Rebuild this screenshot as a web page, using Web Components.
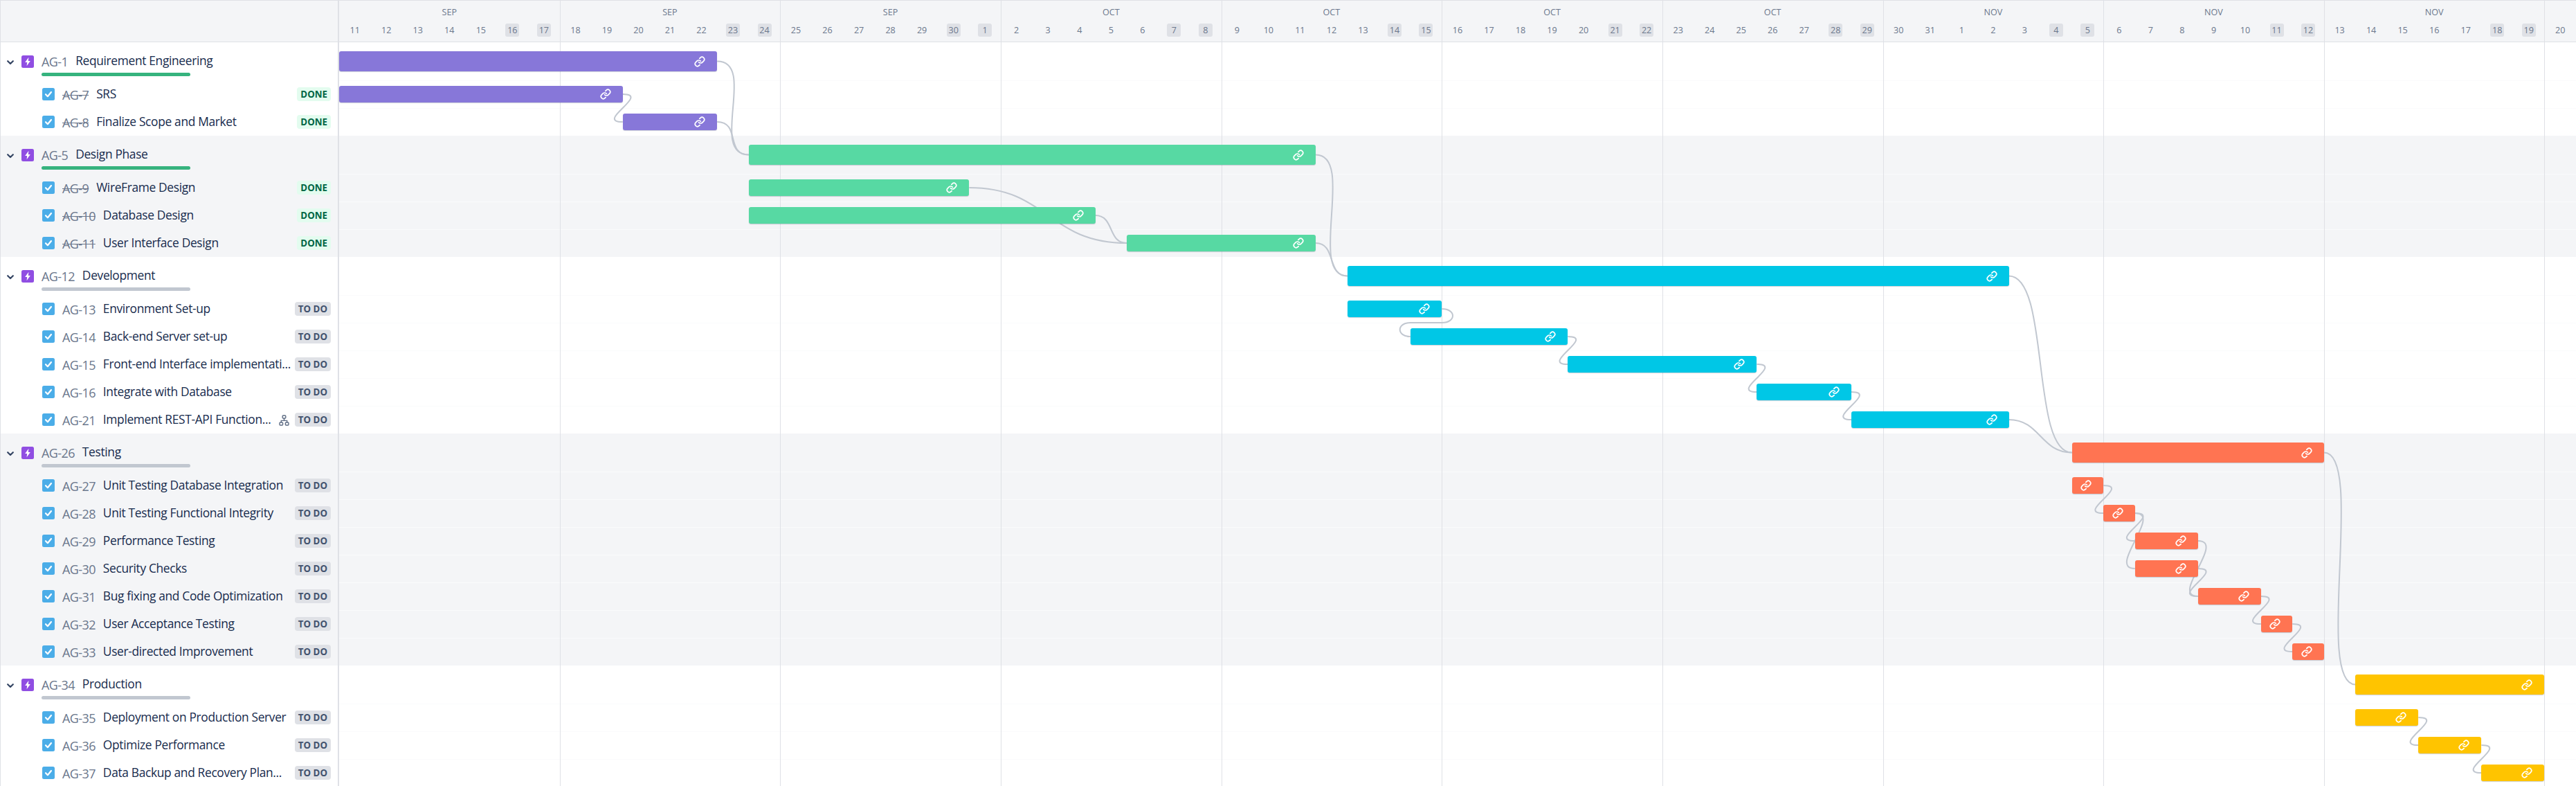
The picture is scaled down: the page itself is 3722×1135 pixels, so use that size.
<!DOCTYPE html>
<html>
<head>
<meta charset="utf-8">
<style>
    html, body { margin: 0; height: 1135px; overflow: hidden; background: #fff; }
</style>
</head>
<body>
<gantt-board></gantt-board>
<script>
const DAY = (3722 - 490) / 71;
const LINK = '<svg viewBox="0 0 24 24" width="16" height="16" fill="none" stroke="#fff" stroke-width="2.6" stroke-linecap="round" stroke-linejoin="round"><path d="M10 13a5 5 0 0 0 7.54.54l3-3a5 5 0 0 0-7.07-7.07l-1.72 1.71"/><path d="M14 11a5 5 0 0 0-7.54-.54l-3 3a5 5 0 0 0 7.07 7.07l1.71-1.71"/></svg>';

const SECTIONS = [
    { color: "#8777D9", band: false, key: "AG-1", title: "Requirement Engineering", from: 0, to: 12, done: true, rows: [
        ["AG-7", "SRS", 0, 9], ["AG-8", "Finalize Scope and Market", 9, 12]
    ]},
    { color: "#57D9A3", band: true, key: "AG-5", title: "Design Phase", from: 13, to: 31, done: true, rows: [
        ["AG-9", "WireFrame Design", 13, 20], ["AG-10", "Database Design", 13, 24], ["AG-11", "User Interface Design", 25, 31]
    ]},
    { color: "#00C7E6", band: false, key: "AG-12", title: "Development", from: 32, to: 53, done: false, rows: [
        ["AG-13", "Environment Set-up", 32, 35], ["AG-14", "Back-end Server set-up", 34, 39],
        ["AG-15", "Front-end Interface implementati...", 39, 45], ["AG-16", "Integrate with Database", 45, 48],
        ["AG-21", "Implement REST-API Function...", 48, 53, true]
    ]},
    { color: "#FF7452", band: true, key: "AG-26", title: "Testing", from: 55, to: 63, done: false, rows: [
        ["AG-27", "Unit Testing Database Integration", 55, 56], ["AG-28", "Unit Testing Functional Integrity", 56, 57],
        ["AG-29", "Performance Testing", 57, 59], ["AG-30", "Security Checks", 57, 59],
        ["AG-31", "Bug fixing and Code Optimization", 59, 61], ["AG-32", "User Acceptance Testing", 61, 62],
        ["AG-33", "User-directed Improvement", 62, 63]
    ]},
    { color: "#FFC400", band: false, key: "AG-34", title: "Production", from: 64, to: 70, done: false, rows: [
        ["AG-35", "Deployment on Production Server", 64, 66], ["AG-36", "Optimize Performance", 66, 68],
        ["AG-37", "Data Backup and Recovery Plan...", 68, 70]
    ]}
];

// from key, to key, control offset
const LINKS = [
    ["AG-1", "AG-5", 58], ["AG-7", "AG-8", 41], ["AG-8", "AG-5", 34],
    ["AG-5", "AG-12", 58], ["AG-9", "AG-11", 114], ["AG-10", "AG-11", 28], ["AG-11", "AG-12", 30],
    ["AG-13", "AG-14", 0], ["AG-14", "AG-15", 41], ["AG-15", "AG-16", 41], ["AG-16", "AG-21", 41],
    ["AG-12", "AG-26", 60], ["AG-21", "AG-26", 45],
    ["AG-27", "AG-28", 41], ["AG-28", "AG-29", 41], ["AG-28", "AG-30", 41],
    ["AG-29", "AG-31", 41], ["AG-30", "AG-31", 41], ["AG-31", "AG-32", 41], ["AG-32", "AG-33", 41],
    ["AG-26", "AG-34", 60], ["AG-35", "AG-36", 41], ["AG-36", "AG-37", 41]
];

class GanttBar extends HTMLElement {
    constructor() {
        super();
        this.attachShadow({ mode: "open" });
    }
    connectedCallback() {
        this.shadowRoot.innerHTML = `
            <style>
                :host { display: flex; align-items: center; justify-content: flex-end; position: relative; z-index: 2;
                    height: var(--bar-height, 24px); padding-right: 17px; border-radius: 3px;
                    background: ${this.getAttribute("color")}; box-shadow: 0 1px 1px rgba(9, 30, 66, .2); }
                svg { display: block; }
            </style>
            ${LINK}`;
    }
}

class StatusLozenge extends HTMLElement {
    constructor() {
        super();
        this.attachShadow({ mode: "open" });
    }
    connectedCallback() {
        this.shadowRoot.innerHTML = `
            <style>
                :host { display: block; flex: none; padding: 0 5px; height: 20px; line-height: 20px;
                    border-radius: 4px; font-size: 13.3px; font-weight: 700; white-space: nowrap; }
                :host([done]) { background: #E3FCEF; color: #006644; }
                :host(:not([done])) { background: #DFE1E6; color: #42526E; }
            </style>
            <slot></slot>`;
    }
}

class IssueRow extends HTMLElement {
    constructor() {
        super();
        this.attachShadow({ mode: "open" });
    }
    connectedCallback() {
        const done = this.hasAttribute("done");
        const from = +this.getAttribute("from");
        const to = +this.getAttribute("to");
        const child = this.hasAttribute("child");
        const progress = done ? "#36B37E" : "#C1C7D0";
        const left = child ? `
            <svg class="icon" viewBox="0 0 18 18" width="18" height="18"><rect width="18" height="18" rx="2.5" fill="#4BADE8"/><path d="M5 9.2l2.9 3L13 6" fill="none" stroke="#fff" stroke-width="2.2" stroke-linecap="round" stroke-linejoin="round"/></svg>
            <span class="key ${done ? "strike" : ""}">${this.getAttribute("key")}</span>
            <span class="title">${this.getAttribute("title")}</span>
            ${this.hasAttribute("tree") ? `<svg class="tree" viewBox="0 0 15 16" width="15" height="16" fill="none" stroke="#5E6C84" stroke-width="1.4"><rect x="5.2" y="1" width="4.6" height="4" rx="1"/><rect x="1" y="11" width="4.6" height="4" rx="1"/><rect x="9.4" y="11" width="4.6" height="4" rx="1"/><path d="M7.5 5v3.4M3.3 11V8.4h8.4V11"/></svg>` : ""}
            <status-lozenge ${done ? "done" : ""}>${done ? "DONE" : "TO DO"}</status-lozenge>` : `
            <svg class="chev" viewBox="0 0 10 7" width="10" height="7" fill="none" stroke="#344563" stroke-width="2.2" stroke-linecap="round" stroke-linejoin="round"><path d="M1.2 1.2L5 5l3.8-3.8"/></svg>
            <svg class="icon" viewBox="0 0 18 18" width="18" height="18"><rect width="18" height="18" rx="2.5" fill="#904EE2"/><path d="M10.4 2.8L5.2 10h3L7.6 15.2 12.8 8H9.8z" fill="#fff"/></svg>
            <div class="stack">
                <div class="line"><span class="key">${this.getAttribute("key")}</span><span class="title">${this.getAttribute("title")}</span></div>
                <div class="progress" style="background:${progress}"></div>
            </div>`;
        this.shadowRoot.innerHTML = `
            <style>
                :host { display: grid; grid-template-columns: 490px 1fr; height: 40px; }
                :host(:not([child])) { height: 55px; --bar-height: 29px; }
                .side { box-sizing: border-box; display: flex; align-items: center; gap: 11px; padding: 0 10px 0 60px;
                    border-left: 1px solid #DFE1E6; border-right: 2px solid #DFE1E6; white-space: nowrap; min-width: 0; }
                :host(:not([child])) .side { padding-left: 9px; align-items: flex-start; padding-top: 19px; gap: 0; }
                .chev { flex: none; margin: 7px 11px 0 0; }
                .icon { flex: none; display: block; }
                .stack { margin-left: 11px; width: 215px; margin-top: -5px; }
                .line { display: flex; gap: 11px; align-items: center; height: 26px; }
                .progress { height: 5px; border-radius: 3px; margin-top: 3.5px; }
                .key { color: #6B778C; font-size: 18px; letter-spacing: -.6px; position: relative; top: 1px; }
                .strike { text-decoration: line-through; }
                .title { color: #172B4D; font-size: 17.4px; letter-spacing: -.35px; position: relative; top: -1px; }
                :host([child]) .title { flex: 1 1 0; min-width: 0; }
                .tree { flex: none; margin: 2px -3px 0 -11px; }
                .chart { display: grid; grid-template-columns: repeat(71, 1fr); align-items: center; }
                :host([child]) .chart { box-shadow: inset 0 1px #FAFBFC; }
                gantt-bar { grid-column: ${from + 1} / ${to + 1}; grid-row: 1; }
            </style>
            <div class="side">${left}</div>
            <div class="chart"><gantt-bar color="${this.getAttribute("color")}"></gantt-bar></div>`;
    }
}

class GanttSection extends HTMLElement {
    constructor() {
        super();
        this.attachShadow({ mode: "open" });
        this.shadowRoot.innerHTML = `
            <style>
                :host { display: block; }
                :host([band]) { background: #F4F5F7; }
            </style>
            <slot></slot>`;
    }
}

class TimelineHeader extends HTMLElement {
    constructor() {
        super();
        this.attachShadow({ mode: "open" });
    }
    connectedCallback() {
        const monthOf = i => (i < 20 ? "SEP" : i < 51 ? "OCT" : "NOV");
        const dateOf = i => (i < 20 ? i + 11 : i < 51 ? i - 19 : i - 50);
        let months = "";
        for (let w = 0; w < 10; w++) months += `<span class="month">${monthOf(w * 7 + 3)}</span>`;
        let days = "";
        for (let i = 0; i < 71; i++) days += `<span class="day ${i % 7 > 4 ? "off" : ""}"><b>${dateOf(i)}</b></span>`;
        this.shadowRoot.innerHTML = `
            <style>
                :host { display: grid; grid-template-columns: 490px 1fr; height: 61px; background: #F4F5F7; color: #6B778C;
                    box-sizing: border-box; border-top: 1px solid #DFE1E6; border-bottom: 1px solid #DFE1E6; font-size: 12.6px; }
                .side { border-left: 1px solid #DFE1E6; border-right: 2px solid #DFE1E6; }
                .cal { display: flex; flex-direction: column; }
                .months { display: grid; grid-template-columns: repeat(71, 1fr); height: 32.5px; align-items: center; }
                .month { grid-column: span 7; text-align: center; }
                .days { display: grid; grid-template-columns: repeat(71, 1fr); align-items: center; justify-items: center; }
                .day b { display: block; font-weight: 400; width: 20px; height: 19px; line-height: 19px; text-align: center; border-radius: 3px; }
                .off b { background: #DFE1E6; }
            </style>
            <div class="side"></div>
            <div class="cal">
                <div class="months">${months}</div>
                <div class="days">${days}</div>
            </div>`;
    }
}

class GanttBoard extends HTMLElement {
    constructor() {
        super();
        this.attachShadow({ mode: "open" });
    }
    connectedCallback() {
        // where each issue sits, for the connectors
        const pos = {};
        let y = 61;
        let body = "";
        for (const s of SECTIONS) {
            pos[s.key] = { from: s.from, to: s.to, y: y + 27.5 };
            y += 55;
            let rows = `<issue-row key="${s.key}" title="${s.title}" color="${s.color}" from="${s.from}" to="${s.to}" ${s.done ? "done" : ""}></issue-row>`;
            for (const r of s.rows) {
                pos[r[0]] = { from: r[2], to: r[3], y: y + 20 };
                y += 40;
                rows += `<issue-row child key="${r[0]}" title="${r[1]}" color="${s.color}" from="${r[2]}" to="${r[3]}" ${s.done ? "done" : ""} ${r[4] ? "tree" : ""}></issue-row>`;
            }
            body += `<gantt-section ${s.band ? "band" : ""}>${rows}</gantt-section>`;
        }
        const X = d => 490 + d * DAY;
        let lines = "";
        for (let w = 1; w <= 10; w++) lines += `<path d="M${Math.round(X(w * 7)) + .5} 0V1135"/>`;
        let paths = "";
        for (const [a, b, c] of LINKS) {
            const x1 = X(pos[a].to), y1 = pos[a].y, x2 = X(pos[b].from), y2 = pos[b].y;
            if (c === 0) {
                const m = (y1 + y2) / 2;
                paths += `<path d="M${x1} ${y1}C${x1 + 21} ${y1} ${x1 + 21} ${m} ${x1} ${m}L${x2} ${m}C${x2 - 20} ${m} ${x2 - 20} ${y2} ${x2} ${y2}"/>`;
            } else {
                paths += `<path d="M${x1} ${y1}C${x1 + c} ${y1} ${x2 - c} ${y2} ${x2} ${y2}"/>`;
            }
        }
        this.shadowRoot.innerHTML = `
            <style>
                :host { display: block; position: relative; width: 3722px; height: 1135px; overflow: hidden;
                    font-family: "Open Sans", "Noto Sans", sans-serif; }
                svg.over { position: absolute; left: 0; top: 0; z-index: 1; pointer-events: none; }
                .grid { stroke: #DFE1E6; stroke-width: 1; fill: none; }
                .links { stroke: #C1C7D0; stroke-width: 2; fill: none; }
            </style>
            <timeline-header></timeline-header>
            ${body}
            <svg class="over" width="3722" height="1135"><g class="grid">${lines}</g><g class="links">${paths}</g></svg>`;
    }
}

customElements.define("gantt-bar", GanttBar);
customElements.define("status-lozenge", StatusLozenge);
customElements.define("issue-row", IssueRow);
customElements.define("gantt-section", GanttSection);
customElements.define("timeline-header", TimelineHeader);
customElements.define("gantt-board", GanttBoard);
</script>
</body>
</html>
